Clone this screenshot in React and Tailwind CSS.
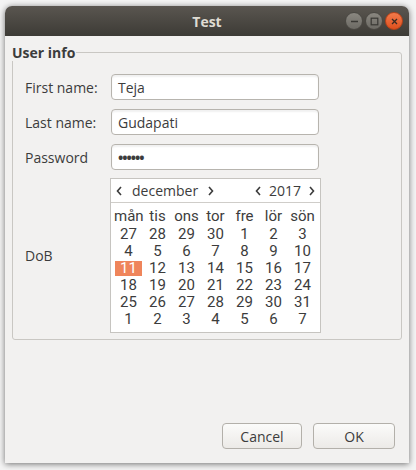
import React from 'react';

const weeks = [
  [27, 28, 29, 30, 1, 2, 3],
  [4, 5, 6, 7, 8, 9, 10],
  [11, 12, 13, 14, 15, 16, 17],
  [18, 19, 20, 21, 22, 23, 24],
  [25, 26, 27, 28, 29, 30, 31],
  [1, 2, 3, 4, 5, 6, 7],
];
const dayNames = ['mån', 'tis', 'ons', 'tor', 'fre', 'lör', 'sön'];

const font = { fontFamily: '"Open Sans", "DejaVu Sans", sans-serif' };
const gridFont = { fontFamily: 'Roboto, "Open Sans", sans-serif' };

const Field = ({ label, value }) => (
  <div className="flex items-center h-[26px]">
    <span className="w-[86px] text-[14px]">{label}</span>
    <div className="w-[208px] h-[26px] rounded-[4px] border border-[#b7b4ae] bg-white shadow-[inset_0_2px_2px_rgba(0,0,0,0.06)] flex items-center px-[6px] text-[14px]">
      {value}
    </div>
  </div>
);

const Chevron = ({ dir }) => (
  <svg width="7" height="10" viewBox="0 0 7 10" className="text-[#3c3c3c]">
    <path
      d={dir === 'left' ? 'M5 1 L1.5 5 L5 9' : 'M2 1 L5.5 5 L2 9'}
      fill="none"
      stroke="currentColor"
      strokeWidth="1.6"
    />
  </svg>
);

const Calendar = () => (
  <div className="w-[211px] h-[155px] border border-[#c6c4c0] bg-white flex flex-col">
    <div className="h-[24px] flex items-center justify-between px-[5px] border-b border-[#cfcdc9] text-[14px]">
      <div className="flex items-center gap-[9px]">
        <Chevron dir="left" />
        <span>december</span>
        <Chevron dir="right" />
      </div>
      <div className="flex items-center gap-[7px]">
        <Chevron dir="left" />
        <span>2017</span>
        <Chevron dir="right" />
      </div>
    </div>
    <div className="px-[3px] pt-[5px] grid grid-cols-7 text-[15px] leading-[17px] text-center" style={gridFont}>
      {dayNames.map((d) => (
        <span key={d} className="h-[18px]">{d}</span>
      ))}
      {weeks.flat().map((n, i) => (
        <div key={i} className="h-[17px] flex items-center justify-center">
          {i === 14 ? (
            <span className="w-[27px] h-[15px] bg-[#ef855b] text-white flex items-center justify-center">
              {n}
            </span>
          ) : (
            <span>{n}</span>
          )}
        </div>
      ))}
    </div>
  </div>
);

const WinButton = ({ kind }) => (
  <div
    className={`w-[18px] h-[18px] rounded-full flex items-center justify-center border ${
      kind === 'close'
        ? 'bg-gradient-to-b from-[#f27a4a] to-[#df4f1b] border-[#b5421a]'
        : 'bg-gradient-to-b from-[#8a8780] to-[#6c6a64] border-[#4a4843]'
    }`}
  >
    <svg width="9" height="9" viewBox="0 0 9 9">
      {kind === 'min' && <path d="M1 4.5 H8" stroke="#3a3935" strokeWidth="1.3" />}
      {kind === 'max' && (
        <rect x="1.2" y="1.2" width="6.6" height="6.6" fill="none" stroke="#3a3935" strokeWidth="1.2" />
      )}
      {kind === 'close' && (
        <path d="M2 2 L7 7 M7 2 L2 7" stroke="#3a2a22" strokeWidth="1.3" />
      )}
    </svg>
  </div>
);

const Button = ({ children, w }) => (
  <button
    className={`${w} h-[26px] rounded-[4px] border border-[#b3b0aa] bg-gradient-to-b from-[#fbfbfa] to-[#eceae7] text-[14px] text-[#3c3c3c]`}
  >
    {children}
  </button>
);

export default function App() {
  return (
    <div className="w-[416px] h-[470px] bg-[#f4f4f4] pt-[6px] pl-[5px] overflow-hidden" style={font}>
      <div className="w-[404px] h-[457px] rounded-t-[7px] overflow-hidden flex flex-col shadow-[0_1px_6px_rgba(0,0,0,0.55)]">
        <div className="h-[30px] shrink-0 relative flex items-center justify-center bg-gradient-to-b from-[#5a5650] to-[#3d3b36]">
          <span className="text-[14px] font-bold text-[#dfdbd2]">Test</span>
          <div className="absolute right-[6px] top-[6px] flex gap-[2px]">
            <WinButton kind="min" />
            <WinButton kind="max" />
            <WinButton kind="close" />
          </div>
        </div>
        <div className="flex-1 bg-[#f2f1f0] flex flex-col text-[#3c3c3c] px-[7px] pt-[8px] pb-[14px]">
          <fieldset className="w-[390px] h-[296px] border border-[#c9c7c3] rounded-[3px] pl-[12px]">
            <legend className="text-[14px] font-bold -ml-[13px] pr-[1px] leading-[17px]">User info</legend>
            <div className="flex flex-col gap-[9px] pt-[13px]">
              <Field label="First name:" value="Teja" />
              <Field label="Last name:" value="Gudapati" />
              <Field label="Password" value={<span className="tracking-[-1px] font-bold">••••••</span>} />
              <div className="flex items-center -mt-[1px]">
                <span className="w-[85px] text-[14px]">DoB</span>
                <Calendar />
              </div>
            </div>
          </fieldset>
          <div className="mt-auto flex justify-end gap-[11px] pr-[7px]">
            <Button w="w-[80px]">Cancel</Button>
            <Button w="w-[82px]">OK</Button>
          </div>
        </div>
      </div>
    </div>
  );
}
